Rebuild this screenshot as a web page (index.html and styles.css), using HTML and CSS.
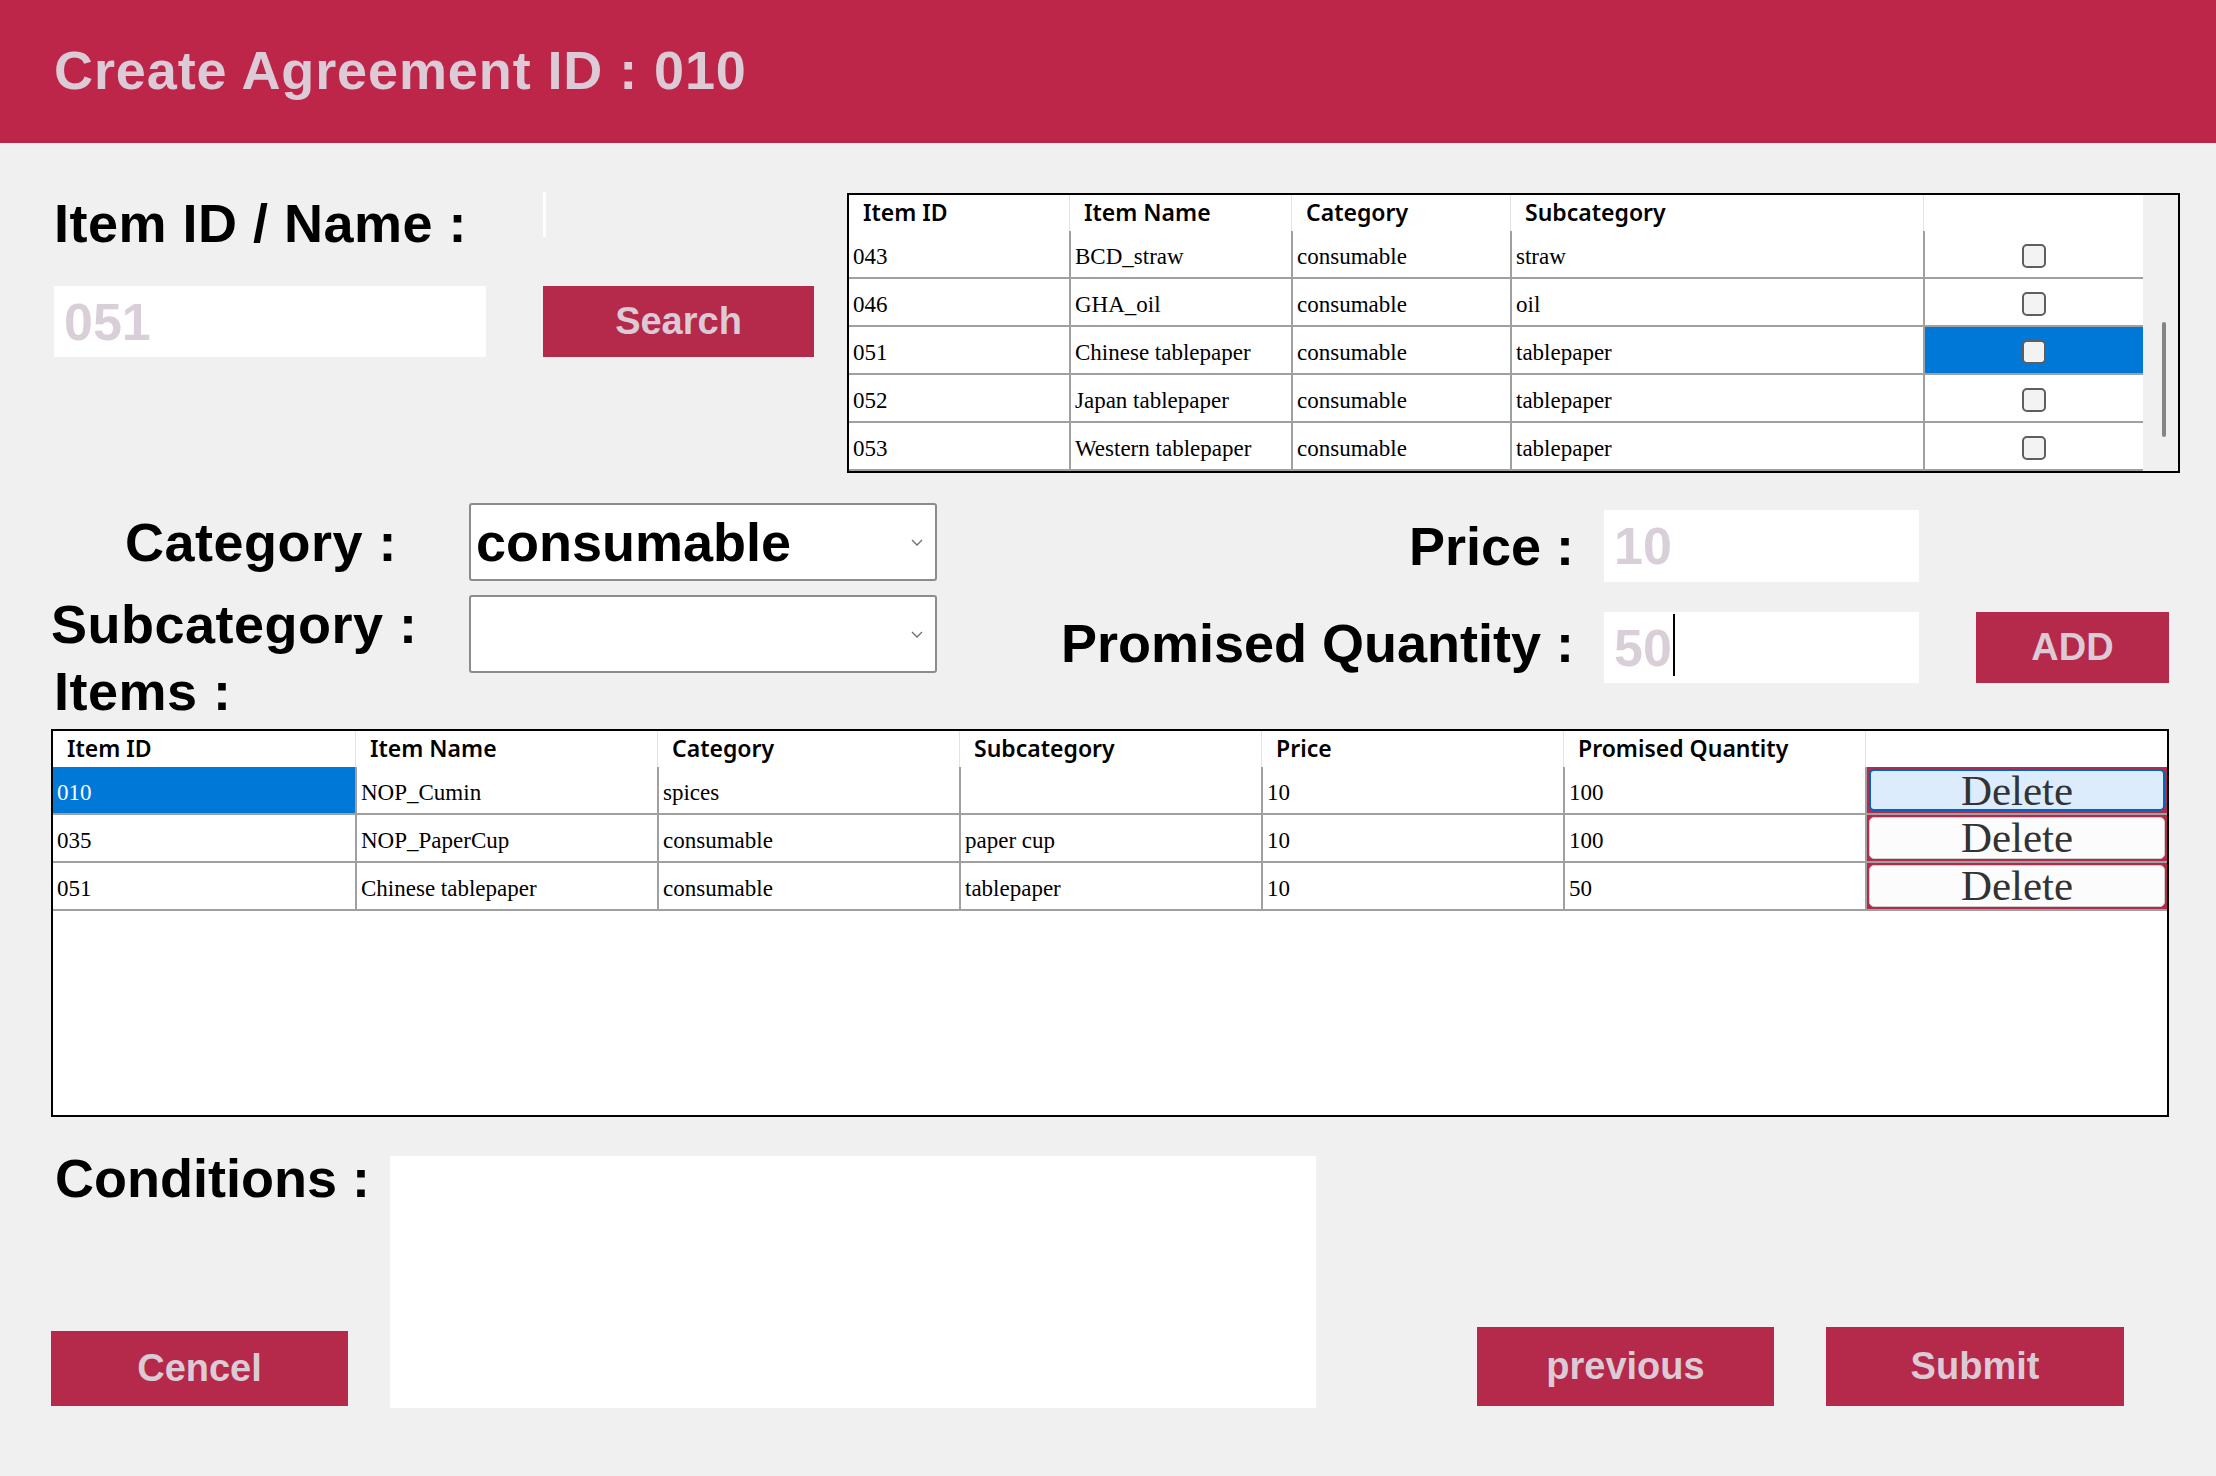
FILE: index.html
```html
<!DOCTYPE html>
<html>
<head>
	<meta charset="utf-8">
	<meta name="viewport" content="width=device-width, initial-scale=1">
	<title>Create Agreement</title>
	<link rel="stylesheet" href="styles.css">
</head>
<body>
<div class="header">
	<h1>Create Agreement ID : 010</h1>
</div>
<div class="page">
	<div class="search-area">
		<div class="search-left">
			<div class="label-row">
				<span class="label">Item ID / Name :</span>
				<span class="hint-line"></span>
			</div>
			<div class="search-row">
				<div class="field search-field">051</div>
				<button class="btn search-btn">Search</button>
			</div>
		</div>
		<div class="result-box">
			<table class="grid result-grid">
				<colgroup>
					<col style="width:220px">
					<col style="width:222px">
					<col style="width:219px">
					<col style="width:413px">
					<col style="width:220px">
				</colgroup>
				<thead>
					<tr><th>Item ID</th><th>Item Name</th><th>Category</th><th>Subcategory</th><th></th></tr>
				</thead>
				<tbody>
					<tr><td>043</td><td>BCD_straw</td><td>consumable</td><td>straw</td><td class="check-cell"><span class="check"></span></td></tr>
					<tr><td>046</td><td>GHA_oil</td><td>consumable</td><td>oil</td><td class="check-cell"><span class="check"></span></td></tr>
					<tr><td>051</td><td>Chinese tablepaper</td><td>consumable</td><td>tablepaper</td><td class="check-cell sel"><span class="check"></span></td></tr>
					<tr><td>052</td><td>Japan tablepaper</td><td>consumable</td><td>tablepaper</td><td class="check-cell"><span class="check"></span></td></tr>
					<tr><td>053</td><td>Western tablepaper</td><td>consumable</td><td>tablepaper</td><td class="check-cell"><span class="check"></span></td></tr>
				</tbody>
			</table>
			<div class="scroll-track"><div class="scroll-thumb"></div></div>
		</div>
	</div>

	<div class="fields">
		<div class="fields-left">
			<div class="select-grid">
				<span class="label category-label">Category :</span>
				<div class="select">
					<span>consumable</span>
					<svg class="chevron" width="12" height="7" viewBox="0 0 12 7"><polyline points="1,1 6,6 11,1" fill="none" stroke="#6d6d6d" stroke-width="1.3"/></svg>
				</div>
				<span class="label subcategory-label">Subcategory :</span>
				<div class="select">
					<span></span>
					<svg class="chevron" width="12" height="7" viewBox="0 0 12 7"><polyline points="1,1 6,6 11,1" fill="none" stroke="#6d6d6d" stroke-width="1.3"/></svg>
				</div>
			</div>
			<div class="label items-label">Items :</div>
		</div>
		<div class="fields-right">
			<span class="label right-label">Price :</span>
			<div class="field price-field">10</div>
			<span></span>
			<span class="label right-label qty-label">Promised Quantity :</span>
			<div class="field qty-field">50<span class="caret"></span></div>
			<button class="btn add-btn">ADD</button>
		</div>
	</div>

	<div class="items-box">
		<table class="grid items-grid">
			<colgroup>
				<col style="width:302px"><col style="width:302px"><col style="width:302px"><col style="width:302px">
				<col style="width:302px"><col style="width:302px"><col style="width:302px">
			</colgroup>
			<thead>
				<tr><th>Item ID</th><th>Item Name</th><th>Category</th><th>Subcategory</th><th>Price</th><th>Promised Quantity</th><th></th></tr>
			</thead>
			<tbody>
				<tr><td class="sel">010</td><td>NOP_Cumin</td><td>spices</td><td></td><td>10</td><td>100</td><td class="del-cell"><button class="del focus">Delete</button></td></tr>
				<tr><td>035</td><td>NOP_PaperCup</td><td>consumable</td><td>paper cup</td><td>10</td><td>100</td><td class="del-cell"><button class="del">Delete</button></td></tr>
				<tr><td>051</td><td>Chinese tablepaper</td><td>consumable</td><td>tablepaper</td><td>10</td><td>50</td><td class="del-cell"><button class="del">Delete</button></td></tr>
			</tbody>
		</table>
	</div>

	<div class="bottom">
		<div class="bottom-left">
			<span class="label conditions-label">Conditions :</span>
			<button class="btn cancel-btn">Cencel</button>
		</div>
		<div class="conditions-box"></div>
		<button class="btn nav-btn previous-btn">previous</button>
		<button class="btn nav-btn submit-btn">Submit</button>
	</div>
</div>
</body>
</html>
```

FILE: styles.css
```css
*
{
	margin: 0;
	padding: 0;
	box-sizing: border-box;
}
body
{
	background: #f0f0f0;
	font-family: "Liberation Sans", Arial, sans-serif;
	min-height: 1476px;
}
.header
{
	height: 143px;
	background: #bd2649;
	padding: 43px 0 0 54px;
}
.header h1
{
	font-size: 54px;
	line-height: 54px;
	font-weight: bold;
	letter-spacing: 0.9px;
	color: #dccad6;
}
.page
{
	padding-left: 51px;
}
.label
{
	font-size: 54px;
	line-height: 54px;
	font-weight: bold;
	letter-spacing: 0.5px;
	color: #000;
	white-space: nowrap;
}

/* search + result list */
.search-area
{
	display: flex;
	height: 330px;
}
.search-left
{
	width: 796px;
	padding: 53px 0 0 3px;
}
.label-row
{
	display: flex;
	align-items: flex-start;
	gap: 76px;
}
.hint-line
{
	width: 3px;
	height: 45px;
	margin-top: -4px;
	background: #fff;
}
.search-row
{
	display: flex;
	gap: 57px;
	margin-top: 36px;
}
.field
{
	display: flex;
	align-items: center;
	height: 71px;
	padding-left: 10px;
	background: #fff;
	font-size: 52px;
	font-weight: bold;
	color: #d9cfd8;
}
.search-field
{
	width: 432px;
}
.btn
{
	height: 71px;
	border: none;
	background: #b5294a;
	color: #dccad6;
	font-family: "Liberation Sans", Arial, sans-serif;
	font-size: 38px;
	font-weight: bold;
}
.search-btn
{
	width: 271px;
}
.result-box
{
	display: flex;
	width: 1333px;
	height: 280px;
	margin-top: 50px;
	border: 2px solid #000;
	background: #fff;
}
.scroll-track
{
	width: 35px;
	padding: 127px 0 0 19px;
	background: #f0f0f0;
}
.scroll-thumb
{
	width: 4px;
	height: 115px;
	border-radius: 2px;
	background: #858585;
}

/* data grids */
.grid
{
	border-collapse: separate;
	border-spacing: 0;
	table-layout: fixed;
	background: #fff;
}
.grid th
{
	height: 36px;
	padding: 0 0 2px 14px;
	text-align: left;
	font-family: "Noto Sans", sans-serif;
	font-size: 23px;
	font-weight: 600;
	color: #000;
	border-left: 1px solid #e3e3e3;
}
.grid td
{
	height: 48px;
	padding: 6px 0 0 4px;
	font-family: "Liberation Serif", serif;
	font-size: 23px;
	color: #000;
	white-space: nowrap;
	border-left: 2px solid #a0a0a0;
	border-bottom: 2px solid #a0a0a0;
}
.grid th:first-child,
.grid td:first-child
{
	border-left: none;
}
.grid td.sel
{
	background: #0078d7;
	color: #fff;
}
.grid .check-cell
{
	padding: 0;
	text-align: center;
}
.check
{
	display: inline-block;
	width: 24px;
	height: 24px;
	margin-top: 2px;
	border: 2px solid #5e5e5e;
	border-radius: 5px;
	background: #f3f3f3;
	vertical-align: middle;
}

/* category / price inputs */
.fields
{
	display: flex;
	align-items: flex-start;
	margin-top: 30px;
}
.fields-left
{
	width: 886px;
}
.select-grid
{
	display: grid;
	grid-template-columns: 418px 468px;
	grid-auto-rows: 78px;
	row-gap: 14px;
	align-items: center;
}
.category-label
{
	padding-left: 74px;
}
.subcategory-label
{
	margin-bottom: 20px;
}
.select
{
	display: flex;
	align-items: center;
	justify-content: space-between;
	height: 78px;
	padding: 0 12px 0 5px;
	border: 2px solid #8c8c8c;
	border-radius: 3px;
	background: #fff;
	font-size: 54px;
	font-weight: bold;
	color: #000;
}
.items-label
{
	margin-top: -9px;
	padding-left: 3px;
}
.fields-right
{
	display: grid;
	grid-template-columns: 520px 315px 220px;
	grid-template-rows: 72px 71px;
	column-gap: 30px;
	row-gap: 30px;
	align-items: center;
	margin: 7px 0 0 117px;
}
.right-label
{
	text-align: right;
	letter-spacing: 0;
}
.qty-label
{
	margin-bottom: 10px;
}
.price-field
{
	height: 72px;
}
.caret
{
	display: inline-block;
	width: 2px;
	height: 62px;
	margin: -6px 0 0 1px;
	background: #000;
}
.add-btn
{
	justify-self: end;
	width: 193px;
}

/* added items */
.items-box
{
	width: 2118px;
	height: 388px;
	margin-top: 11px;
	border: 2px solid #000;
	background: #fff;
}
.grid .del-cell
{
	padding: 2px;
	background: #b5294a;
}
.del
{
	display: block;
	width: 100%;
	height: 42px;
	border: 1px solid #cfcfcf;
	border-radius: 5px;
	background: #fcfcfc;
	font-family: "Liberation Serif", serif;
	font-size: 43px;
	line-height: 40px;
	color: #333;
	overflow: visible;
}
.del.focus
{
	border: 2px solid #0067c0;
	background: #dcecfc;
}

/* conditions + actions */
.bottom
{
	display: flex;
	align-items: flex-end;
	margin-top: 39px;
	padding-right: 92px;
}
.bottom-left
{
	display: flex;
	flex-direction: column;
	justify-content: space-between;
	width: 297px;
	height: 252px;
	padding-bottom: 2px;
}
.conditions-label
{
	margin-top: -5px;
	padding-left: 4px;
	letter-spacing: 0;
}
.cancel-btn
{
	width: 297px;
	height: 75px;
}
.conditions-box
{
	width: 926px;
	height: 252px;
	margin-left: 42px;
	background: #fff;
}
.nav-btn
{
	width: 298px;
	height: 79px;
	margin-bottom: 2px;
}
.previous-btn
{
	width: 297px;
	margin-left: auto;
}
.submit-btn
{
	margin-left: 52px;
}
```
